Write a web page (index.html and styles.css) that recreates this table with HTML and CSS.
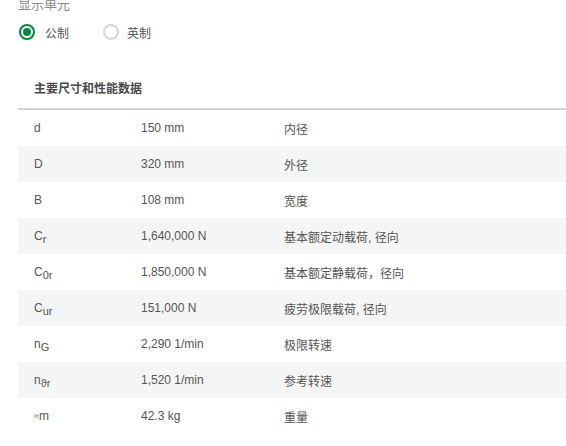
FILE: index.html
```html
<!DOCTYPE html>
<html lang="zh">
<head>
<meta charset="utf-8">
<link rel="stylesheet" href="styles.css">
</head>
<body>
<div class="page">
  <div class="unit-title">显示单元</div>
  <div class="radios">
    <label class="radio checked"><span class="dot"></span><span class="rlabel">公制</span></label>
    <label class="radio"><span class="dot"></span><span class="rlabel">英制</span></label>
  </div>
  <div class="table">
    <div class="thead">主要尺寸和性能数据</div>
    <div class="row"><div class="c1">d</div><div class="c2">150 mm</div><div class="c3">内径</div></div>
    <div class="row alt"><div class="c1">D</div><div class="c2">320 mm</div><div class="c3">外径</div></div>
    <div class="row"><div class="c1">B</div><div class="c2">108 mm</div><div class="c3">宽度</div></div>
    <div class="row alt"><div class="c1">C<sub>r</sub></div><div class="c2">1,640,000 N</div><div class="c3">基本额定动载荷, 径向</div></div>
    <div class="row"><div class="c1">C<sub>0r</sub></div><div class="c2">1,850,000 N</div><div class="c3">基本额定静载荷，径向</div></div>
    <div class="row alt"><div class="c1">C<sub>ur</sub></div><div class="c2">151,000 N</div><div class="c3">疲劳极限载荷, 径向</div></div>
    <div class="row"><div class="c1">n<sub>G</sub></div><div class="c2">2,290 1/min</div><div class="c3">极限转速</div></div>
    <div class="row alt"><div class="c1">n<sub>ϑr</sub></div><div class="c2">1,520 1/min</div><div class="c3">参考转速</div></div>
    <div class="row"><div class="c1"><span class="approx">≈</span>m</div><div class="c2">42.3 kg</div><div class="c3">重量</div></div>
  </div>
</div>
</body>
</html>
```
FILE: styles.css
```css
html, body {
  margin: 0;
  padding: 0;
  background: #fff;
}
body {
  font-family: "Liberation Sans", Arial, "Noto Sans CJK SC", sans-serif;
  font-size: 12px;
  color: #555;
  overflow: hidden;
}
.page {
  padding-left: 18px;
  margin-top: -4px;
}
.unit-title {
  font-size: 13px;
  line-height: 18px;
  color: #8a8a8a;
  font-family: "Liberation Sans", "Noto Sans CJK SC", sans-serif;
}
.radios {
  display: flex;
  align-items: center;
  height: 28px;
  margin-top: 4px;
}
.radio {
  display: flex;
  align-items: center;
  margin-left: 1px;
  width: 83px;
}
.dot {
  width: 12px;
  height: 12px;
  border: 2px solid #d3d7db;
  border-radius: 50%;
  position: relative;
  box-sizing: content-box;
}
.radio.checked .dot {
  border-color: #00893d;
}
.radio.checked .dot::after {
  content: "";
  position: absolute;
  left: 2px;
  top: 2px;
  width: 8px;
  height: 8px;
  border-radius: 50%;
  background: #00893d;
}
.rlabel {
  margin-left: 10px;
  color: #555;
  font-size: 12px;
}
.radio:not(.checked) .rlabel {
  margin-left: 8px;
}
.table {
  margin-top: 24px;
}
.thead {
  height: 38px;
  line-height: 38px;
  padding-left: 16px;
  font-weight: bold;
  color: #4a4a4a;
  border-bottom: 2px solid #d0d4d8;
}
.row {
  display: grid;
  grid-template-columns: 107px 143px 1fr;
  height: 36px;
  align-items: center;
}
.row.alt {
  background: #f4f5f7;
}
.c1, .c2, .c3 {
  padding-left: 16px;
}
sub {
  font-size: 11px;
  vertical-align: -3px;
  line-height: 0;
}
.approx {
  font-size: 9px;
  vertical-align: 1px;
}
```
